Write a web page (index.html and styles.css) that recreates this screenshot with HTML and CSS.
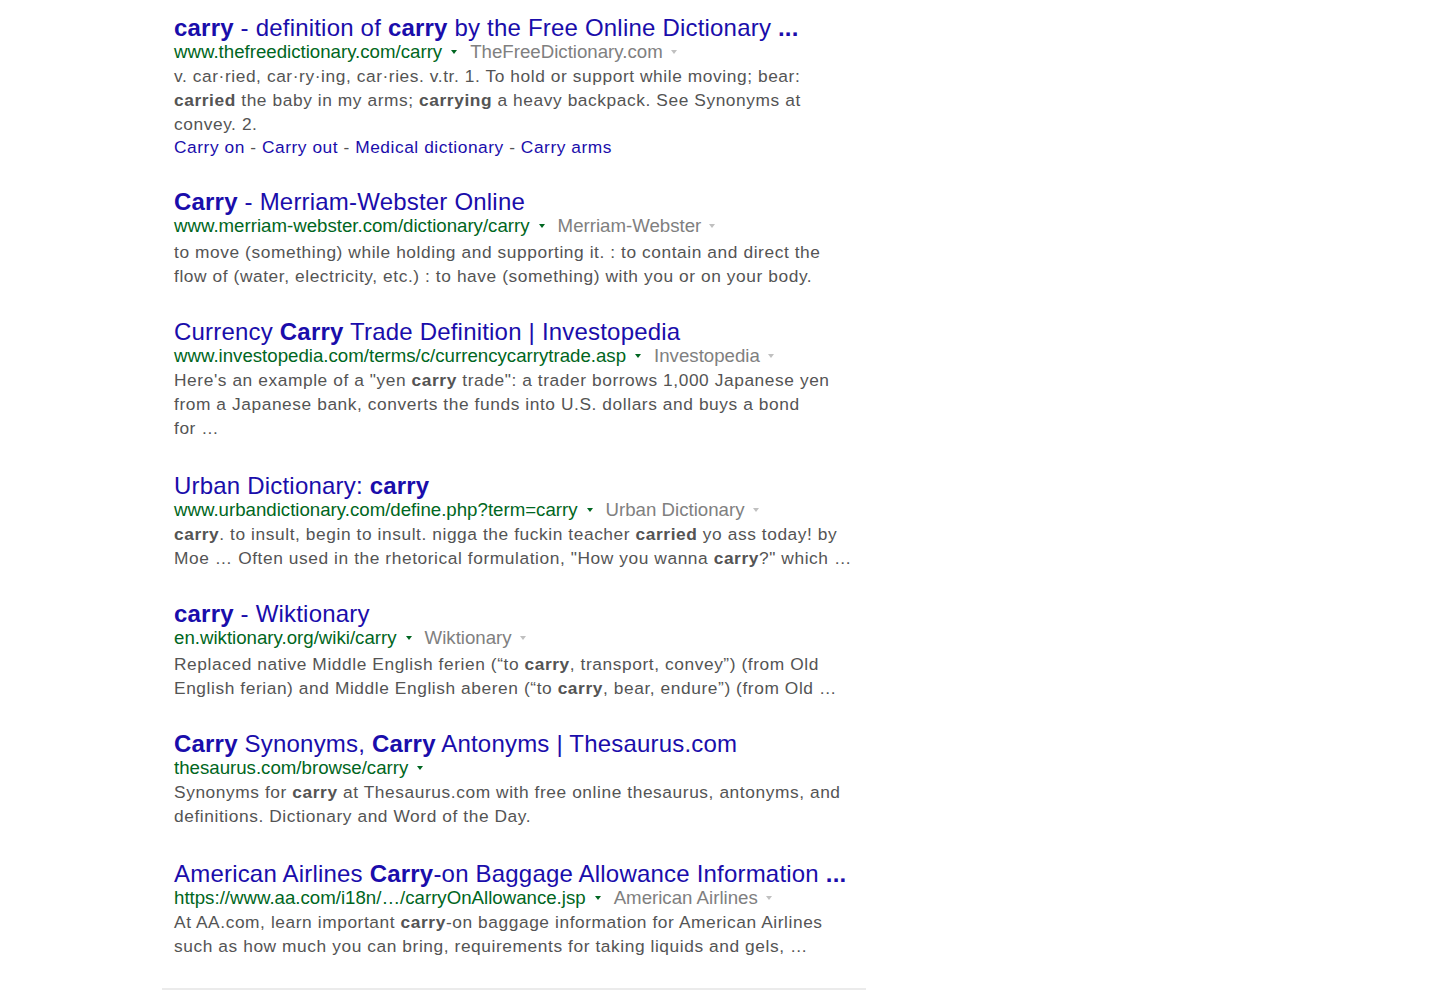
FILE: index.html
```html
<!DOCTYPE html>
<html>
<head>
<meta charset="utf-8">
<link rel="stylesheet" href="styles.css">
</head>
<body>
<div class="results">
  <div class="g">
    <h3 class="r"><a href="#"><b>carry</b> - definition of <b>carry</b> by the Free Online Dictionary <b>...</b></a></h3>
    <div class="url-line"><cite>www.thefreedictionary.com/carry</cite><span class="tri"></span><span class="src">TheFreeDictionary.com</span><span class="tri gray"></span></div>
    <div class="st">v. car·ried, car·ry·ing, car·ries. v.tr. 1. To hold or support while moving; bear: <b>carried</b> the baby in my arms; <b>carrying</b> a heavy backpack. See Synonyms at convey. 2.</div>
    <div class="sitelinks"><a href="#">Carry on</a> - <a href="#">Carry out</a> - <a href="#">Medical dictionary</a> - <a href="#">Carry arms</a></div>
  </div>
  <div class="g">
    <h3 class="r"><a href="#"><b>Carry</b> - Merriam-Webster Online</a></h3>
    <div class="url-line"><cite>www.merriam-webster.com/dictionary/carry</cite><span class="tri"></span><span class="src">Merriam-Webster</span><span class="tri gray"></span></div>
    <div class="st st-gap">to move (something) while holding and supporting it. : to contain and direct the flow of (water, electricity, etc.) : to have (something) with you or on your body.</div>
  </div>
  <div class="g g-wide">
    <h3 class="r"><a href="#">Currency <b>Carry</b> Trade Definition | Investopedia</a></h3>
    <div class="url-line"><cite>www.investopedia.com/terms/c/currencycarrytrade.asp</cite><span class="tri"></span><span class="src">Investopedia</span><span class="tri gray"></span></div>
    <div class="st">Here's an example of a "yen <b>carry</b> trade": a trader borrows 1,000 Japanese yen from a Japanese bank, converts the funds into U.S. dollars and buys a bond<br>for …</div>
  </div>
  <div class="g">
    <h3 class="r"><a href="#">Urban Dictionary: <b>carry</b></a></h3>
    <div class="url-line"><cite>www.urbandictionary.com/define.php?term=carry</cite><span class="tri"></span><span class="src">Urban Dictionary</span><span class="tri gray"></span></div>
    <div class="st"><b>carry</b>. to insult, begin to insult. nigga the fuckin teacher <b>carried</b> yo ass today! by Moe … Often used in the rhetorical formulation, "How you wanna <b>carry</b>?" which …</div>
  </div>
  <div class="g">
    <h3 class="r"><a href="#"><b>carry</b> - Wiktionary</a></h3>
    <div class="url-line"><cite>en.wiktionary.org/wiki/carry</cite><span class="tri"></span><span class="src">Wiktionary</span><span class="tri gray"></span></div>
    <div class="st st-gap">Replaced native Middle English ferien (“to <b>carry</b>, transport, convey”) (from Old English ferian) and Middle English aberen (“to <b>carry</b>, bear, endure”) (from Old …</div>
  </div>
  <div class="g g-wide">
    <h3 class="r"><a href="#"><b>Carry</b> Synonyms, <b>Carry</b> Antonyms | Thesaurus.com</a></h3>
    <div class="url-line"><cite>thesaurus.com/browse/carry</cite><span class="tri"></span></div>
    <div class="st">Synonyms for <b>carry</b> at Thesaurus.com with free online thesaurus, antonyms, and definitions. Dictionary and Word of the Day.</div>
  </div>
  <div class="g">
    <h3 class="r"><a href="#">American Airlines <b>Carry</b>-on Baggage Allowance Information <b>...</b></a></h3>
    <div class="url-line"><cite>https://www.aa.com/i18n/…/carryOnAllowance.jsp</cite><span class="tri"></span><span class="src">American Airlines</span><span class="tri gray"></span></div>
    <div class="st">At AA.com, learn important <b>carry</b>-on baggage information for American Airlines such as how much you can bring, requirements for taking liquids and gels, …</div>
  </div>
</div>
</body>
</html>
```

FILE: styles.css
```css
html, body {
  margin: 0;
  padding: 0;
  background: #fff;
}
body {
  font-family: "Liberation Sans", Arial, sans-serif;
}
.results {
  width: 692px;
  margin-left: 162px;
  padding: 16px 0 0 12px;
  height: 972px;
  box-sizing: content-box;
  border-bottom: 2px solid #ebebeb;
}
.g {
  width: 680px;
  margin-bottom: 32px;
}
.g-wide {
  margin-bottom: 34px;
}
.r {
  margin: 0;
  font-size: 24px;
  font-weight: normal;
  line-height: 24px;
  letter-spacing: 0.2px;
  white-space: nowrap;
}
.r a {
  color: #1a0dab;
  text-decoration: none;
}
.url-line {
  display: flex;
  align-items: center;
  height: 24px;
  font-size: 18.67px;
  white-space: nowrap;
}
cite {
  font-style: normal;
  color: #006621;
}
.src {
  color: #808080;
}
.tri {
  width: 0;
  height: 0;
  border-left: 3px solid transparent;
  border-right: 3px solid transparent;
  border-top: 4px solid #006621;
  margin: 0 13px 0 9px;
}
.tri.gray {
  border-top-color: #c0c0c0;
  margin-right: 0;
  margin-left: 8px;
}
.st {
  font-size: 17.33px;
  line-height: 24px;
  color: #545454;
  letter-spacing: 0.58px;
}
.st-gap {
  margin-top: 2px;
}
.st b {
  color: #545454;
}
.sitelinks {
  font-size: 17.33px;
  line-height: 22px;
  letter-spacing: 0.55px;
  color: #545454;
}
.sitelinks a {
  color: #1a0dab;
  text-decoration: none;
}
```
